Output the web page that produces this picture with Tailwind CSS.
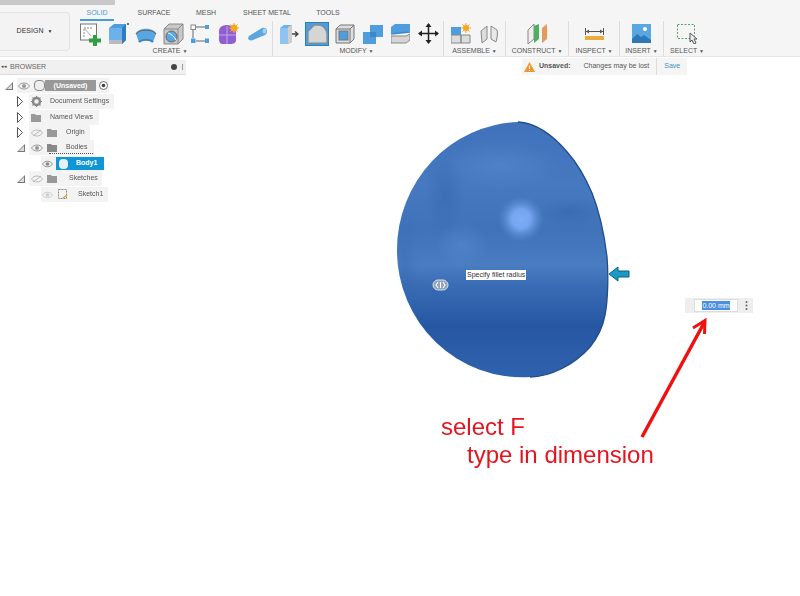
<!DOCTYPE html>
<html lang="en">
<head>
<meta charset="UTF-8" />
<title>Fillet</title>
<script src="https://cdn.jsdelivr.net/npm/@tailwindcss/browser@4"></script>
</head>
<body class="bg-white">
<div class="relative w-[800px] h-[596px] overflow-hidden bg-white font-['Liberation_Sans',Arial,sans-serif]">

  <!-- Toolbar -->
  <div class="relative flex h-[57px] bg-[#f5f5f5] border-b border-[#e6e6e6] blur-[0.35px]">
    <div class="absolute left-0 top-0 w-[115px] h-[5px] bg-[#c9c9c9]"></div>
    <div class="mt-[12px] w-[70px] h-[39px] bg-[#f3f3f3] border border-l-0 border-[#e4e4e4] rounded-r flex items-center justify-center gap-1 text-[7px] text-[#333]">DESIGN <span class="text-[5px]">▼</span></div>

    <div class="ml-[6px] flex flex-col">
      <!-- Tabs -->
      <div class="flex h-[21px] pt-[8px] text-[7px] leading-[9px] text-[#555]">
        <div class="w-[34px] h-[13px] ml-[4px] text-center text-[#4a9cc9] border-b-2 border-[#4a9cc9]">SOLID</div>
        <div class="w-[52px] ml-[14px] text-center">SURFACE</div>
        <div class="w-[30px] ml-[11px] text-center">MESH</div>
        <div class="w-[60px] ml-[16px] text-center">SHEET METAL</div>
        <div class="w-[30px] ml-[16px] text-center">TOOLS</div>
      </div>
      <!-- Tool groups -->
      <div class="flex h-[35px]">
        <div class="w-[196px] flex flex-col">
          <div class="flex h-[25px] items-center pl-[3px] gap-[6px]">
            <svg width="23" height="24" viewBox="0 0 23 24"><rect x="1.500" y="2" width="16" height="16" fill="#fff" stroke="#777"/><path d="M5 15V6h8" fill="none" stroke="#888" stroke-dasharray="2 1"/><path d="M5 6l7 8" stroke="#aaa"/><path d="M14 13h4v3.500h4v4h-4V24h-4v-3.500h-4v-4h4z" fill="#2f9e44"/></svg>
            <svg width="21" height="24" viewBox="0 0 21 24"><path d="M1 6l5-4h12v16l-4 4H1z" fill="#4f9ddf"/><path d="M1 6h13v16H1z" fill="#6cb2ea"/><path d="M14 6l4-4v16l-4 4z" fill="#2f7dbf"/><path d="M1 18h13v4H1z" fill="#bbb"/><circle cx="20" cy="2" r="1" fill="#444"/></svg>
            <svg width="22" height="22" viewBox="0 0 22 22"><path d="M1 11C3 4 19 4 21 11l-3 8c-3-3-11-3-14 0z" fill="#5aa6e0"/><path d="M1 11c3-5 17-5 20 0" fill="none" stroke="#666" stroke-width="1.200"/><path d="M4 19c3-3 11-3 14 0" fill="none" stroke="#3d86c4" stroke-width="2"/></svg>
            <svg width="21" height="22" viewBox="0 0 21 22"><path d="M1 6l5-5h14v15l-5 5H1z" fill="#c9c9c9" stroke="#888"/><path d="M1 6h14v15M15 6l5-5" fill="none" stroke="#888"/><circle cx="8.500" cy="13.500" r="5.500" fill="#5aa6e0" stroke="#666"/><path d="M5 10c3 1 6 3 8 7" stroke="#fff" fill="none"/></svg>
            <svg width="20" height="20" viewBox="0 0 20 20"><rect x="1" y="1" width="4.500" height="4.500" fill="#fff" stroke="#888"/><rect x="15" y="1" width="4" height="4" fill="#4f9ddf"/><rect x="1" y="14.500" width="4.500" height="4.500" fill="#4f9ddf"/><rect x="15" y="14.500" width="4" height="4.500" fill="#4f9ddf"/><path d="M6 3h9M3 6v8M6 17h9" stroke="#666"/></svg>
            <svg class="ml-[2px]" width="21" height="22" viewBox="0 0 21 22"><path d="M1 8c0-4 4-6 8-6s9 3 9 8v7c0 3-3 4-5 4H5c-3 0-4-2-4-5z" fill="#8f5fd0"/><path d="M9 3v18M1 12h17" stroke="#c6a8ec"/><circle cx="16" cy="5" r="3.500" fill="#f5a623"/><path d="M16 0v10M11 5h10M12.500 1.500l7 7M19.500 1.500l-7 7" stroke="#f5a623"/></svg>
            <svg class="ml-[2px]" width="21" height="14" viewBox="0 0 21 14"><path d="M2 9l13-8c2-1 5 0 5 3s-1 3-2 4L6 13c-2 1-5 0-5-2z" fill="#5aa6e0"/><ellipse cx="17.500" cy="4" rx="2" ry="2.500" fill="#a9d2f0"/></svg>
          </div>
          <div class="h-[10px] text-center text-[7px] leading-[10px] text-[#555] pr-[8px]">CREATE <span class="text-[5px]">▼</span></div>
        </div>

        <div class="w-[171px] flex flex-col border-l border-[#ddd]">
          <div class="flex h-[25px] items-center pl-[6px] gap-[6px]">
            <svg width="20" height="22" viewBox="0 0 20 22"><path d="M1 5l4-3h8v17l-4 2H1z" fill="#6cb2ea"/><path d="M9 4l4-2v17l-4 2z" fill="#cfcfcf"/><path d="M1 5h8v16H1z" fill="#8ec4ef"/><path d="M13 11h5M16 8.500l3 2.500-3 2.500" fill="none" stroke="#444" stroke-width="1.400"/></svg>
            <div class="w-[24px] h-[24px] bg-[#4f9ddf] border border-[#2d7fb8] flex items-center justify-center"><svg width="21" height="21" viewBox="0 0 20 20"><path d="M1 8l6-6h5c4 1 6 4 7 8v9H1z" fill="#d5d5d5" stroke="#888"/></svg></div>
            <svg width="20" height="20" viewBox="0 0 20 20"><path d="M1 5l4-4h14v14l-4 4H1z" fill="#ddd" stroke="#777"/><rect x="4" y="7" width="9" height="9" fill="#4f9ddf" stroke="#777"/><path d="M15 5l4-4M1 5h14v14" fill="none" stroke="#777"/></svg>
            <svg class="ml-[2px]" width="20" height="21" viewBox="0 0 20 21"><path d="M7 2h13v12H13v7H0V9h7z" fill="#4f9ddf"/><path d="M7 9h6v5H7z" fill="#3d88c8"/></svg>
            <svg class="ml-[2px]" width="19" height="21" viewBox="0 0 19 21"><path d="M0 4l4-3h15v7l-4 2H0z" fill="#4f9ddf"/><path d="M0 11l19-2" stroke="#3d88c8" stroke-width="1.500"/><path d="M0 13h15l4-2v6l-4 3H0z" fill="#d5d5d5" stroke="#888"/></svg>
            <svg class="ml-[2px]" width="21" height="21" viewBox="0 0 21 21"><path d="M10.500 1v19M1 10.500h19" stroke="#222" stroke-width="1.500"/><path d="M10.500 0l3 4h-6zM10.500 21l3-4h-6zM0 10.500l4-3v6zM21 10.500l-4-3v6z" fill="#222"/></svg>
          </div>
          <div class="h-[10px] text-center text-[7px] leading-[10px] text-[#555] pr-[3px]">MODIFY <span class="text-[5px]">▼</span></div>
        </div>

        <div class="w-[62px] flex flex-col border-l border-[#ddd]">
          <div class="flex h-[25px] items-center pl-[7px] gap-[8px]">
            <svg width="21" height="21" viewBox="0 0 21 21"><path d="M0 4h10v8H0z" fill="#4f9ddf"/><path d="M0 12h10v8H0zM10 12h9v8h-9z" fill="#ddd" stroke="#888"/><circle cx="15" cy="5" r="3" fill="#f5a623"/><path d="M15 0v10M10 5h10M11.500 1.500l7 7M18.500 1.500l-7 7" stroke="#f5a623"/></svg>
            <svg width="19" height="20" viewBox="0 0 19 20"><path d="M1 7l6-5v13l-5 4z" fill="#ddd" stroke="#888"/><path d="M11 2l6 4c1 4 0 8-1 12l-5-3z" fill="#e8e8e8" stroke="#888"/></svg>
          </div>
          <div class="h-[10px] text-center text-[7px] leading-[10px] text-[#555]">ASSEMBLE <span class="text-[5px]">▼</span></div>
        </div>

        <div class="w-[63px] flex flex-col border-l border-[#ddd]">
          <div class="flex h-[25px] items-center justify-center">
            <svg width="21" height="21" viewBox="0 0 21 21"><path d="M1 7l6-6v15l-6 5z" fill="#eee" stroke="#888"/><path d="M7 3l5-2v15l-5 4z" fill="#4fae62"/><path d="M15 5l5-4v15l-5 4z" fill="#e59a5c"/></svg>
          </div>
          <div class="h-[10px] text-center text-[7px] leading-[10px] text-[#555]">CONSTRUCT <span class="text-[5px]">▼</span></div>
        </div>

        <div class="w-[51px] flex flex-col border-l border-[#ddd]">
          <div class="flex h-[25px] items-center justify-center">
            <svg width="19" height="14" viewBox="0 0 19 14"><path d="M.5 1v7M18.500 1v7M1 4.500h17" stroke="#555"/><path d="M1 4.500l3-2v4zM18 4.500l-3-2v4z" fill="#555"/><rect y="9" width="19" height="4" fill="#e9ad3c"/></svg>
          </div>
          <div class="h-[10px] text-center text-[7px] leading-[10px] text-[#555]">INSPECT <span class="text-[5px]">▼</span></div>
        </div>

        <div class="w-[44px] flex flex-col border-l border-[#ddd]">
          <div class="flex h-[25px] items-center justify-center">
            <svg width="19" height="19" viewBox="0 0 19 19"><rect width="19" height="19" fill="#5aa6e0"/><circle cx="13" cy="5" r="2" fill="#fff"/><path d="M0 15l5-5 4 3 3-2 7 5v3H0z" fill="#2f78b8"/></svg>
          </div>
          <div class="h-[10px] text-center text-[7px] leading-[10px] text-[#555]">INSERT <span class="text-[5px]">▼</span></div>
        </div>

        <div class="w-[47px] flex flex-col border-l border-[#ddd]">
          <div class="flex h-[25px] items-center justify-center">
            <svg width="22" height="21" viewBox="0 0 22 21"><rect x="1.500" y="1.500" width="17" height="14" fill="none" stroke="#5da36b" stroke-dasharray="2 1.500"/><path d="M14 10v9l2-2 2 4 2-1-2-4h3z" fill="#eee" stroke="#555"/></svg>
          </div>
          <div class="h-[10px] text-center text-[7px] leading-[10px] text-[#555]">SELECT <span class="text-[5px]">▼</span></div>
        </div>
      </div>
    </div>

    <!-- Unsaved notice -->
    <div class="absolute left-[522px] top-[58px] w-[165px] h-[17px] bg-[#f5f5f5] flex items-center text-[7px] text-[#555]">
      <svg class="ml-[2px]" width="11" height="10" viewBox="0 0 11 10"><path d="M5.500 0L11 10H0z" fill="#ec9a2e"/><path d="M5.500 3.500v3.500M5.500 8v1" stroke="#fff"/></svg>
      <span class="ml-[4px] font-bold">Unsaved:</span>
      <span class="ml-[13px]">Changes may be lost</span>
      <span class="ml-[7px] w-px h-full bg-[#ddd]"></span>
      <span class="ml-[7px] text-[#4a8fb8]">Save</span>
    </div>
  </div>

  <!-- Browser panel -->
  <div class="mt-[3px] w-[186px] text-[7px] text-[#555] blur-[0.35px]">
    <div class="flex items-center h-[15px] bg-[#f0f0f0] border-b border-[#ddd] pl-[1px] pr-[3px]">
      <span class="text-[5px] text-[#444]">◂◂</span>
      <span class="ml-[3px] text-[#666]">BROWSER</span>
      <span class="ml-auto w-[6px] h-[6px] rounded-full bg-[#444]"></span>
      <span class="ml-[5px] w-px h-[6px] bg-[#999]"></span>
    </div>

    <div class="flex flex-col mt-[2px]">
      <div class="flex items-center h-[15px] mt-[1px]">
        <svg class="ml-[5px]" width="8" height="8" viewBox="0 0 8 8"><path d="M0 8L8 0v8z" fill="#777"/><path d="M2 7l5-5v5z" fill="#ddd"/></svg>
        <div class="ml-[4px] flex items-center h-[15px] bg-[#f3f3f3] pl-[1px] pr-[1px]">
          <svg width="12" height="8" viewBox="0 0 12 8"><path d="M.5 4C3 0 9 0 11.500 4 9 8 3 8 .5 4z" fill="none" stroke="#999"/><circle cx="6" cy="4" r="2" fill="#999"/></svg>
          <div class="ml-[4px] w-[11px] h-[11px] bg-[#eee] border border-[#888] rounded-sm"></div>
          <div class="w-[51px] h-[11px] bg-[#999] text-white font-bold leading-[11px] text-center">(Unsaved)</div>
          <svg class="ml-[3px]" width="9" height="9" viewBox="0 0 9 9"><circle cx="4.500" cy="4.500" r="4" fill="#fff" stroke="#555" stroke-width=".8"/><circle cx="4.500" cy="4.500" r="1.800" fill="#444"/></svg>
        </div>
      </div>

      <div class="flex items-center h-[15px] mt-[1px]">
        <svg class="ml-[17px]" width="6" height="11" viewBox="0 0 6 11"><path d="M.5 .5l5 5-5 5z" fill="#fff" stroke="#555"/></svg>
        <div class="ml-[6px] flex items-center h-[15px] w-[85px] bg-[#f3f3f3] pl-[2px]">
          <svg width="11" height="11" viewBox="0 0 11 11"><circle cx="5.500" cy="5.500" r="3.500" fill="none" stroke="#888" stroke-width="2.400"/><path d="M5.500 0v2M5.500 9v2M0 5.500h2M9 5.500h2M1.500 1.500l1.500 1.500M8 8l1.500 1.500M9.500 1.500L8 3M3 8L1.500 9.500" stroke="#888" stroke-width="1.200"/></svg>
          <span class="ml-[8px] whitespace-nowrap">Document Settings</span>
        </div>
      </div>

      <div class="flex items-center h-[15px] mt-[1px]">
        <svg class="ml-[17px]" width="6" height="11" viewBox="0 0 6 11"><path d="M.5 .5l5 5-5 5z" fill="#fff" stroke="#555"/></svg>
        <div class="ml-[6px] flex items-center h-[15px] w-[70px] bg-[#f3f3f3] pl-[2px]">
          <svg width="10" height="8" viewBox="0 0 10 8"><path d="M0 0h4l1 1h5v7H0z" fill="#999"/></svg>
          <span class="ml-[9px] whitespace-nowrap">Named Views</span>
        </div>
      </div>

      <div class="flex items-center h-[15px]">
        <svg class="ml-[17px]" width="6" height="11" viewBox="0 0 6 11"><path d="M.5 .5l5 5-5 5z" fill="#fff" stroke="#555"/></svg>
        <div class="ml-[6px] flex items-center h-[15px] w-[61px] bg-[#f3f3f3] pl-[2px]">
          <svg width="12" height="8" viewBox="0 0 12 8"><path d="M.5 4C3 0 9 0 11.500 4 9 8 3 8 .5 4zM2 7l8-6" fill="none" stroke="#bbb"/></svg>
          <svg class="ml-[4px]" width="10" height="8" viewBox="0 0 10 8"><path d="M0 0h4l1 1h5v7H0z" fill="#999"/></svg>
          <span class="ml-[9px]">Origin</span>
        </div>
      </div>

      <div class="flex items-center h-[15px]">
        <svg class="ml-[17px]" width="8" height="8" viewBox="0 0 8 8"><path d="M0 8L8 0v8z" fill="#777"/><path d="M2 7l5-5v5z" fill="#ddd"/></svg>
        <div class="relative ml-[4px] flex items-center h-[15px] w-[65px] bg-[#f3f3f3] pl-[2px]">
          <svg width="12" height="8" viewBox="0 0 12 8"><path d="M.5 4C3 0 9 0 11.500 4 9 8 3 8 .5 4z" fill="none" stroke="#999"/><circle cx="6" cy="4" r="2" fill="#999"/></svg>
          <svg class="ml-[4px]" width="10" height="8" viewBox="0 0 10 8"><path d="M0 0h4l1 1h5v7H0z" fill="#888"/></svg>
          <span class="ml-[9px]">Bodies</span>
          <div class="absolute left-[20px] bottom-[1px] w-[44px] h-px border-b border-dotted border-[#555]"></div>
        </div>
      </div>

      <div class="flex items-center h-[15px] mt-[1px]">
        <div class="ml-[41px] flex items-center h-[15px] w-[63px] bg-[#f3f3f3] pl-[1px]">
          <svg width="11" height="8" viewBox="0 0 12 8"><path d="M.5 4C3 0 9 0 11.500 4 9 8 3 8 .5 4z" fill="none" stroke="#888"/><circle cx="6" cy="4" r="2" fill="#888"/></svg>
          <div class="ml-[3px] w-[48px] h-[13px] bg-[#0f96d6] text-white font-bold flex items-center">
            <span class="ml-[3px] w-[9px] h-[10px] bg-[#e6f0f6] rounded-sm"></span>
            <span class="ml-[8px]">Body1</span>
          </div>
        </div>
      </div>

      <div class="flex items-center h-[15px]">
        <svg class="ml-[17px]" width="8" height="8" viewBox="0 0 8 8"><path d="M0 8L8 0v8z" fill="#777"/><path d="M2 7l5-5v5z" fill="#ddd"/></svg>
        <div class="ml-[4px] flex items-center h-[15px] w-[73px] bg-[#f3f3f3] pl-[2px]">
          <svg width="12" height="8" viewBox="0 0 12 8"><path d="M.5 4C3 0 9 0 11.500 4 9 8 3 8 .5 4zM2 7l8-6" fill="none" stroke="#bbb"/></svg>
          <svg class="ml-[4px]" width="10" height="8" viewBox="0 0 10 8"><path d="M0 0h4l1 1h5v7H0z" fill="#999"/></svg>
          <span class="ml-[12px]">Sketches</span>
        </div>
      </div>

      <div class="flex items-center h-[15px] mt-[1px]">
        <div class="ml-[41px] flex items-center h-[15px] w-[67px] bg-[#f3f3f3] pl-[1px]">
          <svg width="11" height="8" viewBox="0 0 12 8"><path d="M.5 4C3 0 9 0 11.500 4 9 8 3 8 .5 4z" fill="none" stroke="#ccc"/><circle cx="6" cy="4" r="2" fill="#ccc"/></svg>
          <svg class="ml-[5px]" width="11" height="11" viewBox="0 0 11 11"><rect x=".5" y=".5" width="8" height="9" fill="none" stroke="#888" stroke-dasharray="2 1"/><path d="M5 9l4-3" stroke="#e8a33a" stroke-width="1.500"/></svg>
          <span class="ml-[9px]">Sketch1</span>
        </div>
      </div>
    </div>
  </div>

  <!-- 3D canvas -->
  <svg class="absolute left-0 top-0 pointer-events-none" width="800" height="596" viewBox="0 0 800 596">
    <defs>
      <linearGradient id="dome" x1="0" y1="0" x2="0" y2="1">
        <stop offset="0" stop-color="#3f72bb"/>
        <stop offset=".25" stop-color="#4679c0"/>
        <stop offset=".42" stop-color="#3f72b9"/>
        <stop offset=".56" stop-color="#4a7cc2"/>
        <stop offset=".64" stop-color="#3a6cb5"/>
        <stop offset=".8" stop-color="#2757a3"/>
        <stop offset="1" stop-color="#2f62ae"/>
      </linearGradient>
      <radialGradient id="spot">
        <stop offset="0" stop-color="#7dacf8"/>
        <stop offset=".4" stop-color="#76a6f0"/>
        <stop offset="1" stop-color="#5a8cd4" stop-opacity="0"/>
      </radialGradient>
      <radialGradient id="soft">
        <stop offset="0" stop-color="#3567b0" stop-opacity=".6"/>
        <stop offset="1" stop-color="#3567b0" stop-opacity="0"/>
      </radialGradient>
      <radialGradient id="glow">
        <stop offset="0" stop-color="#5a8ad0" stop-opacity=".55"/>
        <stop offset="1" stop-color="#5a8ad0" stop-opacity="0"/>
      </radialGradient>
      <clipPath id="domeClip"><path d="M518 122A125 128 0 0 0 397 250A125 127 0 0 0 530 377C550 377 574 365 590 347C598 337 603 326 605 315C608 300 608.500 275 607 257C604 232 598 208 592 193C585 177 577 163 568 153C553 135 535 123 518 122Z"/></clipPath>
    </defs>
    <path d="M518 122A125 128 0 0 0 397 250A125 127 0 0 0 530 377C550 377 574 365 590 347C598 337 603 326 605 315C608 300 608.500 275 607 257C604 232 598 208 592 193C585 177 577 163 568 153C553 135 535 123 518 122Z" fill="url(#dome)"/>
    <g clip-path="url(#domeClip)">
      <ellipse cx="500" cy="165" rx="60" ry="24" fill="url(#glow)"/>
      <ellipse cx="445" cy="195" rx="20" ry="40" fill="url(#soft)"/>
      <ellipse cx="570" cy="212" rx="34" ry="14" fill="url(#soft)"/>
      <ellipse cx="405" cy="265" rx="14" ry="60" fill="url(#soft)" opacity=".6"/>
      <ellipse cx="462" cy="245" rx="26" ry="24" fill="url(#glow)"/>
      <circle cx="521" cy="219" r="23" fill="url(#spot)"/>
    </g>
    <path d="M518 122C535 123 553 135 568 153C577 163 585 177 592 193C598 208 604 232 607 257C608.500 275 608 300 605 315C603 326 598 337 590 347C574 365 550 377 530 377" fill="none" stroke="#1f4d8c" stroke-width="1.300"/>
    <!-- fillet arrow -->
    <path d="M609 274l9-7v4h11v6h-11v4z" fill="#1b9ac9" stroke="#0d5f80"/>
    <!-- fillet grip -->
    <rect x="433" y="280" width="15" height="10" rx="5" fill="#8fa3bd" stroke="#d6dde6"/>
    <path d="M438 282l-2 3 2 3M443 282l2 3-2 3M440.500 282v6" fill="none" stroke="#fff" stroke-width="1.100"/>
    <!-- red annotation arrow -->
    <path d="M642 437L704 323" stroke="#f01010" stroke-width="3.500"/>
    <path d="M693 328L705 320.500L704.500 334" fill="none" stroke="#f01010" stroke-width="3"/>
  </svg>

  <div class="absolute left-[466px] top-[270px] h-[10px] px-[1px] bg-white text-[7px] leading-[10px] text-[#333]">Specify fillet radius</div>

  <!-- Dimension input -->
  <div class="absolute left-[685px] top-[298px] w-[68px] h-[15px] bg-[#eeeeee] flex items-center">
    <div class="ml-[9px] w-[44px] h-[13px] bg-white border border-[#ddd] flex items-center justify-center">
      <span class="bg-[#4a90e2] text-white text-[7px] leading-[9px]">0.00 mm</span>
    </div>
    <svg class="ml-[7px]" width="3" height="9" viewBox="0 0 3 9"><circle cx="1.500" cy="1" r="1" fill="#666"/><circle cx="1.500" cy="4.500" r="1" fill="#666"/><circle cx="1.500" cy="8" r="1" fill="#666"/></svg>
  </div>

  <div class="absolute left-[441px] top-[414px] text-[24px] leading-[26px] text-[#e5141e]">select F</div>
  <div class="absolute left-[467px] top-[442px] text-[24px] leading-[26px] text-[#e5141e]">type in dimension</div>
</div>
</body>
</html>
